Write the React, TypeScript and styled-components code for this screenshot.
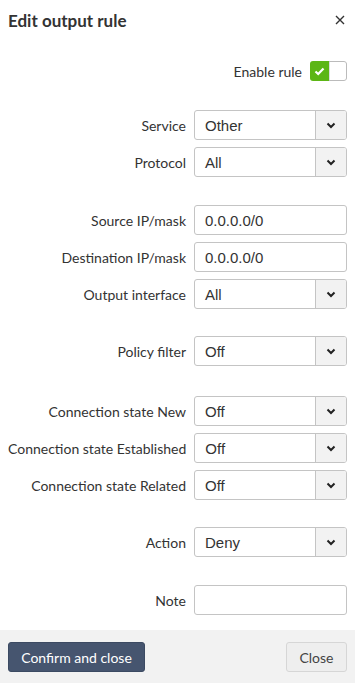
import React from "react";
import styled, { createGlobalStyle } from "styled-components";

const GlobalStyle = createGlobalStyle`
  html, body {
    margin: 0;
    padding: 0;
    background: #fff;
  }
  body {
    font-family: Lato, "Liberation Sans", sans-serif;
    color: #333;
  }
`;

const Dialog = styled.div`
  width: 355px;
  height: 683px;
  display: flex;
  flex-direction: column;
  background: #fff;
`;

const Header = styled.div`
  height: 40px;
  flex-shrink: 0;
  display: flex;
  align-items: center;
  justify-content: space-between;
  padding: 0 8px 0 8px;
`;

const Title = styled.h1`
  margin: 0;
  font-size: 17px;
  font-weight: 700;
  color: #333;
`;

const CloseX = styled.button`
  border: none;
  background: none;
  padding: 0;
  width: 14px;
  height: 14px;
  display: flex;
  align-items: center;
  justify-content: center;
  cursor: pointer;
`;

const Body = styled.div`
  flex: 1;
  padding: 21px 8px 0 8px;
  display: flex;
  flex-direction: column;
`;

const EnableRow = styled.div`
  display: flex;
  justify-content: flex-end;
  align-items: center;
  gap: 8px;
  font-size: 14px;
  height: 20px;
  margin-bottom: 29px;
`;

const Toggle = styled.div`
  width: 37px;
  height: 20px;
  display: flex;
  border-radius: 3px;
  overflow: hidden;
  box-sizing: border-box;
`;

const ToggleOn = styled.div`
  width: 19px;
  background: #5cb615;
  display: flex;
  align-items: center;
  justify-content: center;
`;

const ToggleOff = styled.div`
  flex: 1;
  background: #fff;
  border: 1px solid #bbb;
  border-left: none;
  border-radius: 0 3px 3px 0;
  box-shadow: inset 1px 0 0 #ddd;
`;

const Group = styled.div<{ $gap?: number }>`
  display: flex;
  flex-direction: column;
  gap: 7px;
  margin-bottom: ${(p) => p.$gap ?? 28}px;
`;

const Row = styled.div`
  display: flex;
  align-items: center;
  height: 30px;
`;

const Label = styled.label`
  flex: 1;
  text-align: right;
  font-size: 14px;
  color: #333;
  padding-right: 8px;
  white-space: nowrap;
`;

const Field = styled.div`
  width: 153px;
  height: 30px;
  box-sizing: border-box;
  border: 1px solid #c4c4c4;
  border-radius: 3px;
  display: flex;
  align-items: stretch;
  background: #fff;
`;

const Value = styled.div`
  flex: 1;
  display: flex;
  align-items: center;
  padding-left: 10px;
  font-family: "Liberation Sans", Arial, sans-serif;
  font-size: 15px;
  color: #333;
`;

const Arrow = styled.div`
  width: 30px;
  border-left: 1px solid #c4c4c4;
  background: #f2f2f2;
  display: flex;
  align-items: center;
  justify-content: center;
  border-radius: 0 2px 2px 0;
`;

const Footer = styled.div`
  height: 53px;
  flex-shrink: 0;
  background: #f2f2f2;
  display: flex;
  align-items: center;
  justify-content: space-between;
  padding: 1px 8px 0;
  box-sizing: border-box;
`;

const Button = styled.button<{ $primary?: boolean }>`
  height: 30px;
  box-sizing: border-box;
  border-radius: 3px;
  font-family: Lato, "Liberation Sans", sans-serif;
  font-size: 14px;
  padding: 0;
  white-space: nowrap;
  cursor: pointer;
  background: ${(p) => (p.$primary ? "#46556f" : "#eeeeee")};
  color: ${(p) => (p.$primary ? "#fff" : "#444")};
  border: 1px solid ${(p) => (p.$primary ? "#3c4a62" : "#d6d6d6")};
  width: ${(p) => (p.$primary ? "137px" : "61px")};
`;

const Chevron = () => (
  <svg width="10" height="7" viewBox="0 0 10 7">
    <path d="M1.5 1.5 L5 5 L8.5 1.5" fill="none" stroke="#222" strokeWidth="2" />
  </svg>
);

const Select = ({ value }: { value: string }) => (
  <Field>
    <Value>{value}</Value>
    <Arrow>
      <Chevron />
    </Arrow>
  </Field>
);

const Input = ({ value }: { value: string }) => (
  <Field>
    <Value>{value}</Value>
  </Field>
);

const FormRow = ({ label, children }: { label: string; children: React.ReactNode }) => (
  <Row>
    <Label>{label}</Label>
    {children}
  </Row>
);

export default function App() {
  return (
    <>
      <GlobalStyle />
      <Dialog>
        <Header>
          <Title>Edit output rule</Title>
          <CloseX aria-label="close">
            <svg width="10" height="10" viewBox="0 0 10 10">
              <path d="M1 1 L9 9 M9 1 L1 9" stroke="#333" strokeWidth="1.4" />
            </svg>
          </CloseX>
        </Header>
        <Body>
          <EnableRow>
            <span>Enable rule</span>
            <Toggle>
              <ToggleOn>
                <svg width="11" height="9" viewBox="0 0 11 9">
                  <path d="M1.5 4.5 L4.2 7 L9.5 1.5" fill="none" stroke="#fff" strokeWidth="2.2" />
                </svg>
              </ToggleOn>
              <ToggleOff />
            </Toggle>
          </EnableRow>

          <Group $gap={28}>
            <FormRow label="Service"><Select value="Other" /></FormRow>
            <FormRow label="Protocol"><Select value="All" /></FormRow>
          </Group>

          <Group $gap={27}>
            <FormRow label="Source IP/mask"><Input value="0.0.0.0/0" /></FormRow>
            <FormRow label="Destination IP/mask"><Input value="0.0.0.0/0" /></FormRow>
            <FormRow label="Output interface"><Select value="All" /></FormRow>
          </Group>

          <Group $gap={30}>
            <FormRow label="Policy filter"><Select value="Off" /></FormRow>
          </Group>

          <Group $gap={27}>
            <FormRow label="Connection state New"><Select value="Off" /></FormRow>
            <FormRow label="Connection state Established"><Select value="Off" /></FormRow>
            <FormRow label="Connection state Related"><Select value="Off" /></FormRow>
          </Group>

          <Group $gap={28}>
            <FormRow label="Action"><Select value="Deny" /></FormRow>
          </Group>

          <Group $gap={0}>
            <FormRow label="Note"><Input value="" /></FormRow>
          </Group>
        </Body>
        <Footer>
          <Button $primary>Confirm and close</Button>
          <Button>Close</Button>
        </Footer>
      </Dialog>
    </>
  );
}
